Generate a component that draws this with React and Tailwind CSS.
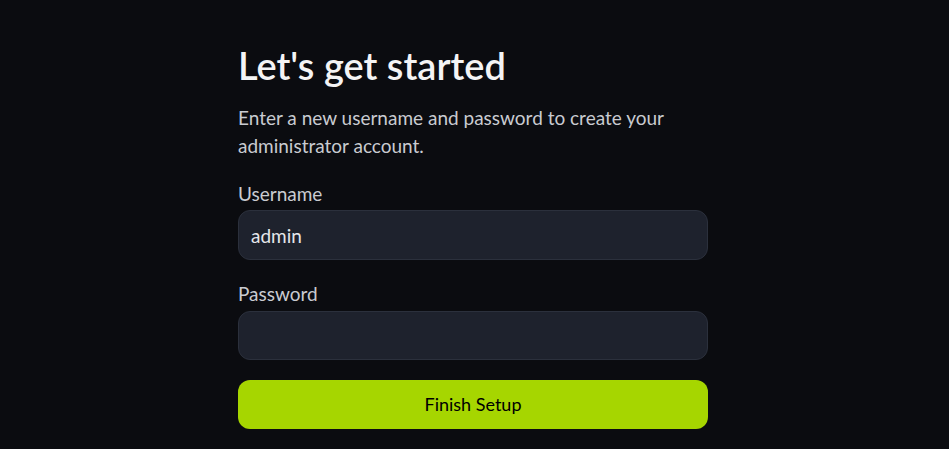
export default function App() {
    return (
        <div className="min-h-screen bg-[#0b0c10] pr-[3px] font-['Lato',sans-serif]">
            <div className="mx-auto w-[470px] pt-[44px]">
                <h1 className="text-[38px] leading-[42px] font-semibold text-[#f4f4f5]">
                    Let's get started
                </h1>
                <p className="mt-[18px] text-[19px] leading-[28px] text-[#c9cbd1]">
                    Enter a new username and password to create your administrator account.
                </p>
                <form className="mt-[20px] flex flex-col" onSubmit={(e) => e.preventDefault()}>
                    <label className="text-[19px] leading-[28px] text-[#c9cbd1]">Username</label>
                    <input
                        className="mt-[2px] h-[50px] rounded-xl border border-[#2b303c] bg-[#1e222d] px-3 text-[19px] text-[#e5e7eb] outline-none"
                        defaultValue="admin"
                    />
                    <label className="mt-[20px] text-[19px] leading-[28px] text-[#c9cbd1]">Password</label>
                    <input
                        type="password"
                        className="mt-[3px] h-[49px] rounded-xl border border-[#2b303c] bg-[#1e222d] px-3 text-[19px] text-[#e5e7eb] outline-none"
                    />
                    <button className="mt-[20px] h-[49px] rounded-xl bg-[#a6d600] text-[18px] text-black">
                        Finish Setup
                    </button>
                </form>
            </div>
        </div>
    );
}
